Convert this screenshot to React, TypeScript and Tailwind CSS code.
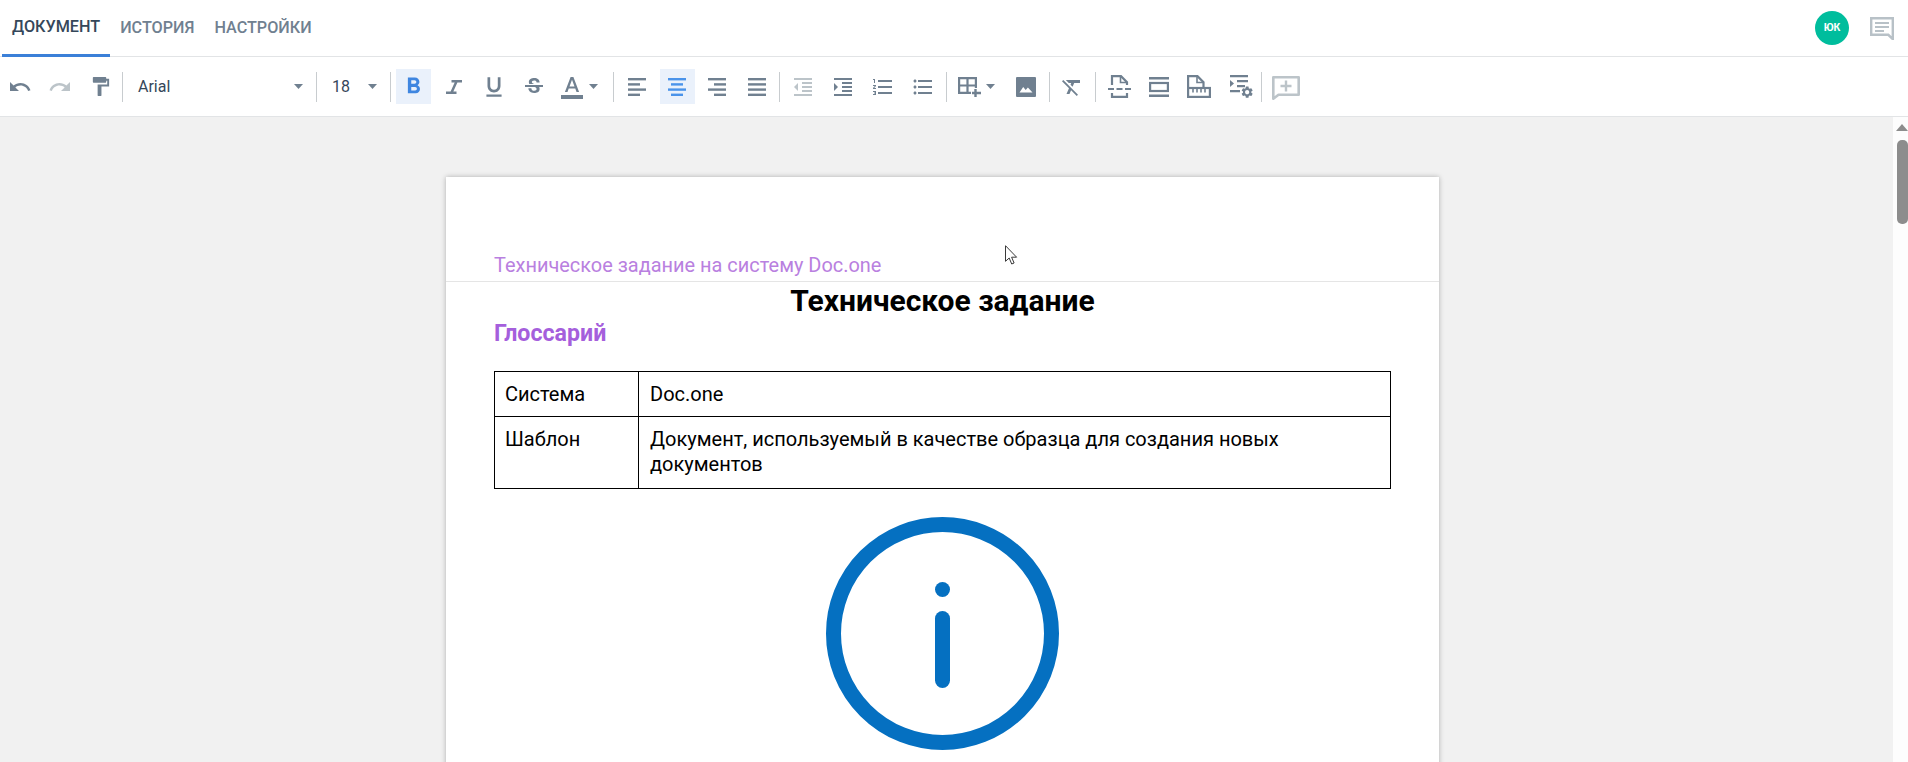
import type { ReactNode } from 'react'

const icon = '#708090'
const faded = '#bcc4c9'
const blue = '#3f86e0'

function Sep() {
  return <div className="w-px h-[30px] shrink-0 bg-[#c8cccf]" />
}

function Cell({ active, children }: { active?: boolean; children: ReactNode }) {
  return (
    <div className="w-[40px] h-[35px] shrink-0 flex items-center justify-center">
      <div className={`w-[35px] h-[35px] flex items-center justify-center ${active ? 'bg-[#eaf1fb]' : ''}`}>
        {children}
      </div>
    </div>
  )
}

function Caret() {
  return (
    <svg width="9" height="5" viewBox="0 0 9 5" className="shrink-0">
      <path d="M0 0h9L4.5 5z" fill={icon} />
    </svg>
  )
}

function Mat({ d, color = icon, size = 24 }: { d: string; color?: string; size?: number }) {
  return (
    <svg width={size} height={size} viewBox="0 0 24 24" className="shrink-0">
      <path d={d} fill={color} />
    </svg>
  )
}

function AlignIcon({ kind, color = icon }: { kind: 'left' | 'center' | 'right' | 'full'; color?: string }) {
  const short = kind === 'full' ? 18 : 12
  const x = kind === 'left' || kind === 'full' ? 0 : kind === 'center' ? 3 : 6
  return (
    <svg width="18" height="18" viewBox="0 0 18 18" className="shrink-0">
      <rect x="0" y="0" width="18" height="2.4" fill={color} />
      <rect x={x} y="5.2" width={short} height="2.4" fill={color} />
      <rect x="0" y="10.4" width="18" height="2.4" fill={color} />
      <rect x={x} y="15.6" width={short} height="2.4" fill={color} />
    </svg>
  )
}

const paths = {
  undo: 'M12.5 8c-2.65 0-5.05.99-6.9 2.6L2 7v9h9l-3.62-3.62c1.39-1.16 3.16-1.88 5.12-1.88 3.54 0 6.55 2.31 7.6 5.5l2.37-.78C21.08 11.03 17.15 8 12.5 8z',
  redo: 'M18.4 10.6C16.55 8.99 14.15 8 11.5 8c-4.65 0-8.58 3.03-9.96 7.22L3.9 16c1.05-3.19 4.05-5.5 7.6-5.5 1.95 0 3.73.72 5.12 1.88L13 16h9V7l-3.6 3.6z',
  roller: 'M18 4V3c0-.55-.45-1-1-1H5c-.55 0-1 .45-1 1v4c0 .55.45 1 1 1h12c.55 0 1-.45 1-1V6h1v4H9v11c0 .55.45 1 1 1h2c.55 0 1-.45 1-1v-9h8V4h-3z',
  bold: 'M15.6 10.79c.97-.67 1.65-1.77 1.65-2.79 0-2.26-1.75-4-4-4H7v14h7.04c2.09 0 3.71-1.7 3.71-3.79 0-1.52-.86-2.82-2.15-3.42zM10 6.5h3c.83 0 1.5.67 1.5 1.5s-.67 1.5-1.5 1.5h-3v-3zm3.5 9H10v-3h3.5c.83 0 1.5.67 1.5 1.5s-.67 1.5-1.5 1.5z',
  underline: 'M12 17c3.31 0 6-2.69 6-6V3h-2.5v8c0 1.93-1.57 3.5-3.5 3.5S8.5 12.93 8.5 11V3H6v8c0 3.31 2.69 6 6 6zm-7 2v2h14v-2H5z',
  strike: 'M6.85 7.08C6.85 4.37 9.45 3 12.24 3c1.64 0 3 .49 3.9 1.28.77.65 1.46 1.73 1.46 3.24h-3.01c0-.31-.05-.59-.15-.85-.29-.86-1.2-1.28-2.25-1.28-1.86 0-2.34 1.02-2.34 1.7 0 .48.25.88.74 1.21.38.25.77.48 1.41.7H7.39c-.21-.34-.54-.89-.54-1.82zM21 12v-2H3v2h9.62c1.15.45 1.96.75 1.96 1.97 0 1-.81 1.67-2.28 1.67-1.54 0-2.93-.54-2.93-2.51H6.4c0 .55.08 1.13.24 1.58.81 2.29 3.29 3.3 5.67 3.3 2.27 0 5.3-.89 5.3-4.05 0-.3-.01-1.16-.48-1.96H21z',
  outdent: 'M11 17h10v-2H11v2zm-8-5l4 4V8l-4 4zm0 9h18v-2H3v2zM3 3v2h18V3H3zm8 6h10V7H11v2zm0 4h10v-2H11v2z',
  indent: 'M3 21h18v-2H3v2zM3 8v8l4-4-4-4zm8 9h10v-2H11v2zM3 3v2h18V3H3zm8 6h10V7H11v2zm0 4h10v-2H11v2z',
  ol: 'M2 17h2v.5H3v1h1v.5H2v1h3v-4H2v1zm1-9h1V4H2v1h1v3zm-1 3h1.8L2 13.1v.9h3v-1H3.2L5 10.9V10H2v1zm5-6v2h14V5H7zm0 14h14v-2H7v2zm0-6h14v-2H7v2z',
  ul: 'M4 10.5c-.83 0-1.5.67-1.5 1.5s.67 1.5 1.5 1.5 1.5-.67 1.5-1.5-.67-1.5-1.5-1.5zm0-6c-.83 0-1.5.67-1.5 1.5S3.17 7.5 4 7.5 5.5 6.83 5.5 6 4.83 4.5 4 4.5zm0 12c-.83 0-1.5.68-1.5 1.5s.68 1.5 1.5 1.5 1.5-.68 1.5-1.5-.67-1.5-1.5-1.5zM7 19h14v-2H7v2zm0-6h14v-2H7v2zm0-8v2h14V5H7z',
  clear: 'M3.27 5L2 6.27l6.97 6.97L6.5 19h3l1.57-3.66L16.73 21 18 19.73 3.55 5.27 3.27 5zM6 5v.18L8.82 8h2.4l-.72 1.68 2.1 2.1L14.21 8H20V5H6z',
  gear: 'M19.14 12.94c.04-.3.06-.61.06-.94 0-.32-.02-.64-.07-.94l2.03-1.58c.18-.14.23-.41.12-.61l-1.92-3.32c-.12-.22-.37-.29-.59-.22l-2.39.96c-.5-.38-1.03-.7-1.62-.94l-.36-2.54c-.04-.24-.24-.41-.48-.41h-3.84c-.24 0-.43.17-.47.41l-.36 2.54c-.59.24-1.13.57-1.62.94l-2.39-.96c-.22-.08-.47 0-.59.22L2.74 8.87c-.12.21-.08.47.12.61l2.03 1.58c-.05.3-.09.63-.09.94s.02.64.07.94l-2.03 1.58c-.18.14-.23.41-.12.61l1.92 3.32c.12.22.37.29.59.22l2.39-.96c.5.38 1.03.7 1.62.94l.36 2.54c.05.24.24.41.48.41h3.84c.24 0 .44-.17.47-.41l.36-2.54c.59-.24 1.13-.56 1.62-.94l2.39.96c.22.08.47 0 .59-.22l1.92-3.32c.12-.22.07-.47-.12-.61l-2.01-1.58zM12 15.6c-1.98 0-3.6-1.62-3.6-3.6s1.62-3.6 3.6-3.6 3.6 1.62 3.6 3.6-1.62 3.6-3.6 3.6z',
}

function ItalicIcon() {
  return (
    <svg width="16" height="14" viewBox="0 0 16 14" className="shrink-0">
      <path d="M5.5 1.2H16M0 12.8h10.5M10.6 1.2 5.4 12.8" fill="none" stroke={icon} strokeWidth="2.5" />
    </svg>
  )
}

function TextColorIcon() {
  return (
    <svg width="22" height="24" viewBox="0 0 22 24" className="shrink-0">
      <path d="M9.6 2 3.9 17h2.6l1.2-3.4h6.6l1.2 3.4h2.6L12.4 2H9.6zm-1.1 9.4L11 4.8l2.5 6.6h-5z" fill={icon} />
      <rect x="0" y="20" width="22" height="4" fill={icon} />
    </svg>
  )
}

function TableIcon() {
  return (
    <svg width="23" height="20" viewBox="0 0 23 20" className="shrink-0">
      <path d="M1.1 1.1h16.8v14.8H1.1zM9.5 1.1v14.8M1.1 8.5h16.8" fill="none" stroke={icon} strokeWidth="2.2" />
      <rect x="13" y="11" width="10" height="9" fill="#fff" />
      <path d="M17.5 12v8M14 16h9" stroke={icon} strokeWidth="2.4" />
    </svg>
  )
}

function ImageIcon() {
  return (
    <svg width="20" height="20" viewBox="0 0 20 20" className="shrink-0">
      <rect width="20" height="20" rx="1" fill={icon} />
      <path d="M3.5 15.5 7.2 10l2.5 3 2.2-2.5 4.6 5z" fill="#fff" />
    </svg>
  )
}

function PageBreakIcon() {
  return (
    <svg width="23" height="23" viewBox="0 0 23 23" className="shrink-0">
      <path d="M4 10V1.1h9l6 6V10M4 18v3.9h15V18" fill="none" stroke={icon} strokeWidth="2.2" />
      <path d="M12.5 1.5v6h6" fill="none" stroke={icon} strokeWidth="1.6" />
      <path d="M0 14h6M8.5 14h6M17 14h6" stroke={icon} strokeWidth="2.2" />
    </svg>
  )
}

function HeaderIcon() {
  return (
    <svg width="20" height="20" viewBox="0 0 20 20" className="shrink-0">
      <path d="M0 1.2h20M0 18.8h20" stroke={icon} strokeWidth="2.4" />
      <rect x="1.1" y="6" width="17.8" height="8" fill="none" stroke={icon} strokeWidth="2.2" />
    </svg>
  )
}

function PageSizeIcon() {
  return (
    <svg width="24" height="23" viewBox="0 0 24 23" className="shrink-0">
      <path d="M1.1 13V1.1h9.4l6 6V13" fill="none" stroke={icon} strokeWidth="2.2" />
      <path d="M10 1.5v6h6" fill="none" stroke={icon} strokeWidth="1.6" />
      <rect x="1.1" y="13" width="21.8" height="8.9" fill="none" stroke={icon} strokeWidth="2.2" />
      <path d="M6 14v3.5M10 14v3.5M14 14v3.5M18 14v3.5" stroke={icon} strokeWidth="1.6" />
    </svg>
  )
}

function DocSettingsIcon() {
  return (
    <svg width="24" height="24" viewBox="0 0 24 24" className="shrink-0">
      <path d="M0 1.1h18M7 6.1h11M7 11.1h8M0 16.1h10" stroke={icon} strokeWidth="2.2" />
      <path d="M0 5v7l4-3.5z" fill={icon} />
      <g transform="translate(10.2 10.2) scale(.58)">
        <path d={paths.gear} fill={icon} />
      </g>
    </svg>
  )
}

function CommentPlusIcon() {
  return (
    <svg width="28" height="24" viewBox="0 0 28 24" className="shrink-0 translate-y-[1px]">
      <path d="M1.3 1.3h25.4v17.4H6.5l-5.2 4z" fill="none" stroke={faded} strokeWidth="2.6" strokeLinejoin="round" />
      <path d="M14 4.5v11M8.5 10h11" stroke={faded} strokeWidth="2.4" />
    </svg>
  )
}

function CommentsIcon() {
  return (
    <svg width="24" height="23" viewBox="0 0 24 23" className="shrink-0">
      <path d="M1.2 1.2h21.6v21l-4.5-4.4H1.2z" fill="none" stroke="#b8c1c7" strokeWidth="2.4" />
      <path d="M5 6h14M5 10h14M5 14h9" stroke="#b8c1c7" strokeWidth="2.2" />
    </svg>
  )
}

function InfoPicture() {
  return (
    <svg width="233" height="233" viewBox="0 0 233 233" className="mx-auto mt-[28px]">
      <circle cx="116.5" cy="116.5" r="109" fill="none" stroke="#0570c1" strokeWidth="15" />
      <circle cx="116.5" cy="72.5" r="7.5" fill="#0570c1" />
      <rect x="109" y="94" width="15" height="77" rx="7.5" fill="#0570c1" />
    </svg>
  )
}

function Toolbar() {
  return (
    <div className="h-[60px] shrink-0 flex items-center bg-white border-b border-[#e2e4e6]">
      <Cell><Mat d={paths.undo} /></Cell>
      <Cell><Mat d={paths.redo} color={faded} /></Cell>
      <Cell><Mat d={paths.roller} size={23} /></Cell>
      <div className="ml-[2px]"><Sep /></div>

      <div className="w-[193px] shrink-0 pl-[15px] pr-[13px] flex items-center justify-between text-[16px] text-[#35475a]">
        <span>Arial</span>
        <Caret />
      </div>
      <Sep />
      <div className="w-[73px] shrink-0 pl-[15px] flex items-center gap-[18px] text-[16px] text-[#35475a]">
        <span>18</span>
        <Caret />
      </div>
      <Sep />

      <div className="ml-[2px] flex items-center">
        <Cell active><Mat d={paths.bold} color={blue} size={27} /></Cell>
        <div className="ml-[1px]"><Cell><ItalicIcon /></Cell></div>
        <Cell><Mat d={paths.underline} size={26} /></Cell>
        <Cell><Mat d={paths.strike} /></Cell>
        <div className="w-[59px] shrink-0 pl-[7px] flex items-center gap-[6px]">
          <TextColorIcon />
          <Caret />
        </div>
      </div>
      <Sep />

      <div className="ml-[3px] flex items-center">
        <Cell><AlignIcon kind="left" /></Cell>
        <Cell active><AlignIcon kind="center" color="#4a93ea" /></Cell>
        <Cell><AlignIcon kind="right" /></Cell>
        <Cell><AlignIcon kind="full" /></Cell>
      </div>
      <div className="ml-[2px]"><Sep /></div>

      <div className="ml-[3px] flex items-center">
        <Cell><Mat d={paths.outdent} color={faded} /></Cell>
        <Cell><Mat d={paths.indent} /></Cell>
        <Cell><Mat d={paths.ol} /></Cell>
        <Cell><Mat d={paths.ul} /></Cell>
      </div>
      <div className="ml-[3px]"><Sep /></div>

      <div className="w-[59px] shrink-0 pl-[11px] flex items-center gap-[5px]">
        <TableIcon />
        <Caret />
      </div>
      <Cell><ImageIcon /></Cell>
      <div className="ml-[3px]"><Sep /></div>

      <div className="ml-[2px]">
        <Cell><Mat d={paths.clear} /></Cell>
      </div>
      <div className="ml-[3px]"><Sep /></div>

      <div className="ml-[3px] flex items-center">
        <Cell><PageBreakIcon /></Cell>
        <Cell><HeaderIcon /></Cell>
        <Cell><PageSizeIcon /></Cell>
      </div>
      <div className="ml-[3px] w-[39px] shrink-0 flex justify-center">
        <DocSettingsIcon />
      </div>
      <Sep />
      <div className="ml-[4px]">
        <Cell><CommentPlusIcon /></Cell>
      </div>
    </div>
  )
}

export default function App() {
  return (
    <div className="relative h-[762px] w-full overflow-hidden flex flex-col bg-white [font-family:Roboto,sans-serif]">
      {/* Tabs */}
      <div className="h-[57px] shrink-0 flex items-stretch pl-[2px] pr-[14px] border-b border-[#e2e4e6]">
        <div className="px-[10px] border-b-[3px] border-[#3b80d8] -mb-px flex items-center text-[16.2px] font-medium text-[#35475a]">
          ДОКУМЕНТ
        </div>
        <div className="px-[10px] flex items-center text-[16.2px] font-medium text-[#708090]">ИСТОРИЯ</div>
        <div className="px-[10px] flex items-center text-[16.2px] font-medium text-[#708090]">НАСТРОЙКИ</div>
        <div className="ml-auto flex items-center gap-[21px]">
          <div className="w-[34px] h-[34px] rounded-full bg-[#00bd9d] flex items-center justify-center text-[10.5px] font-bold text-white">
            ЮК
          </div>
          <CommentsIcon />
        </div>
      </div>

      <Toolbar />

      <div className="flex-1 flex min-h-0">
        <div className="flex-1 bg-[#f1f1f1] overflow-hidden pt-[60px] pl-[446px]">
          <div className="w-[993px] h-[800px] bg-white shadow-[0_0_5px_rgba(0,0,0,0.28)]">
            <div className="h-[105px] flex items-end pl-[48px] pb-[4px] border-b border-[#e5e5e5] text-[19.95px] leading-[23px] text-[#b980e0]">
              Техническое задание на систему Doc.one
            </div>
            <div className="px-[48px]">
              <h1 className="text-center text-[30px] leading-[38px] font-bold text-black">Техническое задание</h1>
              <h2 className="text-[23.2px] leading-[27px] font-bold text-[#a55fdc]">Глоссарий</h2>
              <table className="mt-[24px] w-full border-collapse text-[20px] leading-[25px] text-black">
                <tbody>
                  <tr className="h-[45px]">
                    <td className="w-[144px] border border-black px-[10px] align-middle">Система</td>
                    <td className="border border-black pl-[11px] pr-[10px] align-middle">Doc.one</td>
                  </tr>
                  <tr className="h-[72px]">
                    <td className="border border-black px-[10px] pt-[10px] align-top">Шаблон</td>
                    <td className="border border-black pl-[11px] pr-[10px] pt-[10px] align-top">
                      Документ, используемый в качестве образца для создания новых документов
                    </td>
                  </tr>
                </tbody>
              </table>
              <InfoPicture />
            </div>
          </div>
        </div>

        {/* Scrollbar */}
        <div className="w-[15px] shrink-0 bg-[#fdfdfd] flex flex-col items-end">
          <svg width="12" height="7" viewBox="0 0 12 7" className="mt-[7px]">
            <path d="M6 0l6 7H0z" fill="#8d8d8d" />
          </svg>
          <div className="mt-[9px] w-[11px] h-[84px] rounded-[5px] bg-[#8d8d8d]" />
        </div>
      </div>

      {/* Mouse pointer */}
      <svg width="13" height="20" viewBox="0 0 13 20" className="absolute left-[1005px] top-[245px]">
        <path d="M.5.7v15.6l3.7-3.3 2.5 6 2.4-1-2.5-5.8h5z" fill="#fff" stroke="#3a3a3a" strokeWidth="1" />
      </svg>
    </div>
  )
}
